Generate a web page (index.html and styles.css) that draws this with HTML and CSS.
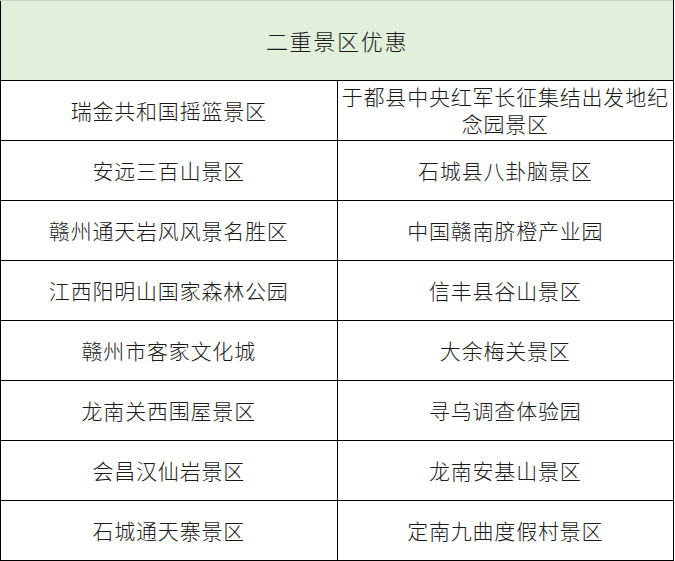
FILE: index.html
```html
<!DOCTYPE html>
<html lang="zh">
<head>
<meta charset="utf-8">
<link rel="stylesheet" href="styles.css">
</head>
<body>
<table class="sheet">
  <tr class="head"><td colspan="2">二重景区优惠</td></tr>
  <tr><td>瑞金共和国摇篮景区</td><td class="two">于都县中央红军长征集结出发地纪<br>念园景区</td></tr>
  <tr><td>安远三百山景区</td><td>石城县八卦脑景区</td></tr>
  <tr><td>赣州通天岩风风景名胜区</td><td>中国赣南脐橙产业园</td></tr>
  <tr><td>江西阳明山国家森林公园</td><td>信丰县谷山景区</td></tr>
  <tr><td>赣州市客家文化城</td><td>大余梅关景区</td></tr>
  <tr><td>龙南关西围屋景区</td><td>寻乌调查体验园</td></tr>
  <tr><td>会昌汉仙岩景区</td><td>龙南安基山景区</td></tr>
  <tr><td>石城通天寨景区</td><td>定南九曲度假村景区</td></tr>
</table>
</body>
</html>
```
FILE: styles.css
```css
html, body {
  margin: 0;
  padding: 0;
  background: #ffffff;
}
.sheet {
  border-collapse: collapse;
  table-layout: fixed;
  width: 674px;
  font-family: "Noto Sans CJK SC", "Noto Sans", sans-serif;
  font-weight: 300;
  color: #1a1a1a;
}
.sheet td {
  width: 336px;
  height: 59px;
  padding: 0;
  border: 1px solid #000;
  text-align: center;
  vertical-align: middle;
  font-size: 21px;
  letter-spacing: 0.8px;
  line-height: 27px;
}
.sheet tr:first-child td {
  border-top: 1px solid #c8d4c0;
}
.sheet .head td {
  height: 79px;
  background: #e2efda;
  font-size: 22px;
  letter-spacing: 1.7px;
}
.sheet td.two {
  vertical-align: top;
  padding-top: 2px;
  height: 57px;
}
```
